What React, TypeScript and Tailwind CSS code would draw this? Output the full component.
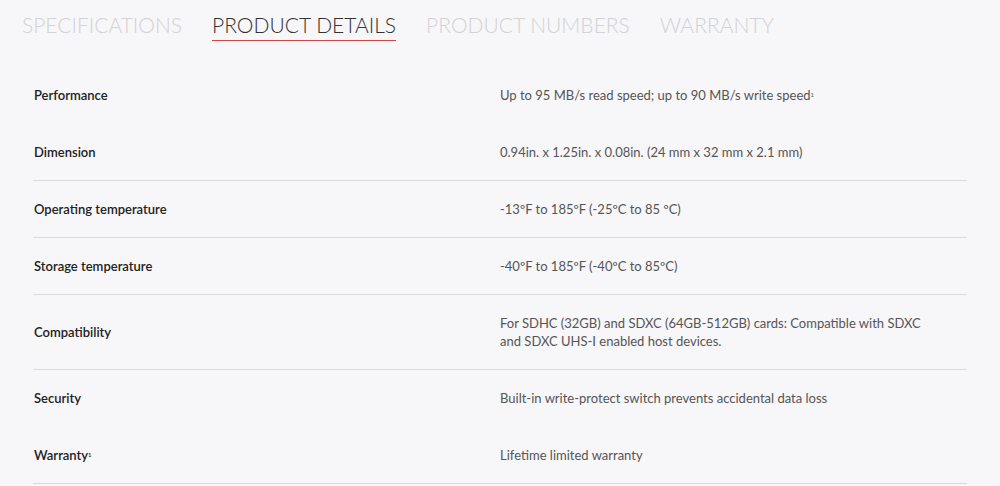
const tabs = ["SPECIFICATIONS", "PRODUCT DETAILS", "PRODUCT NUMBERS", "WARRANTY"];

type Row = { label: React.ReactNode; value: React.ReactNode; line: boolean };

const rows: Row[] = [
  {
    label: "Performance",
    value: (
      <>
        Up to 95 MB/s read speed; up to 90 MB/s write speed<sup className="text-[6px]">1</sup>
      </>
    ),
    line: false,
  },
  { label: "Dimension", value: "0.94in. x 1.25in. x 0.08in. (24 mm x 32 mm x 2.1 mm)", line: true },
  { label: "Operating temperature", value: "-13ºF to 185ºF (-25ºC to 85 ºC)", line: true },
  { label: "Storage temperature", value: "-40ºF to 185ºF (-40ºC to 85ºC)", line: true },
  {
    label: "Compatibility",
    value: "For SDHC (32GB) and SDXC (64GB-512GB) cards: Compatible with SDXC and SDXC UHS-I enabled host devices.",
    line: true,
  },
  { label: "Security", value: "Built-in write-protect switch prevents accidental data loss", line: false },
  {
    label: (
      <>
        Warranty<sup className="text-[6px]">1</sup>
      </>
    ),
    value: "Lifetime limited warranty",
    line: true,
  },
];

export default function App() {
  return (
    <div className="h-[486px] w-[1000px] overflow-hidden bg-[#f7f6f8] font-['Lato','Liberation_Sans',sans-serif]">
      <nav className="flex gap-[30px] pl-[22px] pt-3">
        {tabs.map((tab) => (
          <span
            key={tab}
            className={
              tab === "PRODUCT DETAILS"
                ? "border-b border-[#d24646] pb-[2px] text-[21px] font-light leading-[26px] text-[#333]"
                : "border-b border-transparent pb-[2px] text-[21px] font-light leading-[26px] text-[#d3d2d6]"
            }
          >
            {tab}
          </span>
        ))}
      </nav>

      <div className="mx-[33px] mt-[26px]">
        {rows.map((row, i) => (
          <div
            key={i}
            className={
              row.line
                ? "grid grid-cols-[467px_1fr] border-b border-[#dadada] py-[19px] text-[13px] leading-[18px]"
                : "grid grid-cols-[467px_1fr] border-b border-transparent py-[19px] text-[13px] leading-[18px]"
            }
          >
            <div className="flex items-center pl-px font-semibold text-[#222]">
              <span>{row.label}</span>
            </div>
            <div className="max-w-[426px] text-[#555]">{row.value}</div>
          </div>
        ))}
      </div>
    </div>
  );
}
